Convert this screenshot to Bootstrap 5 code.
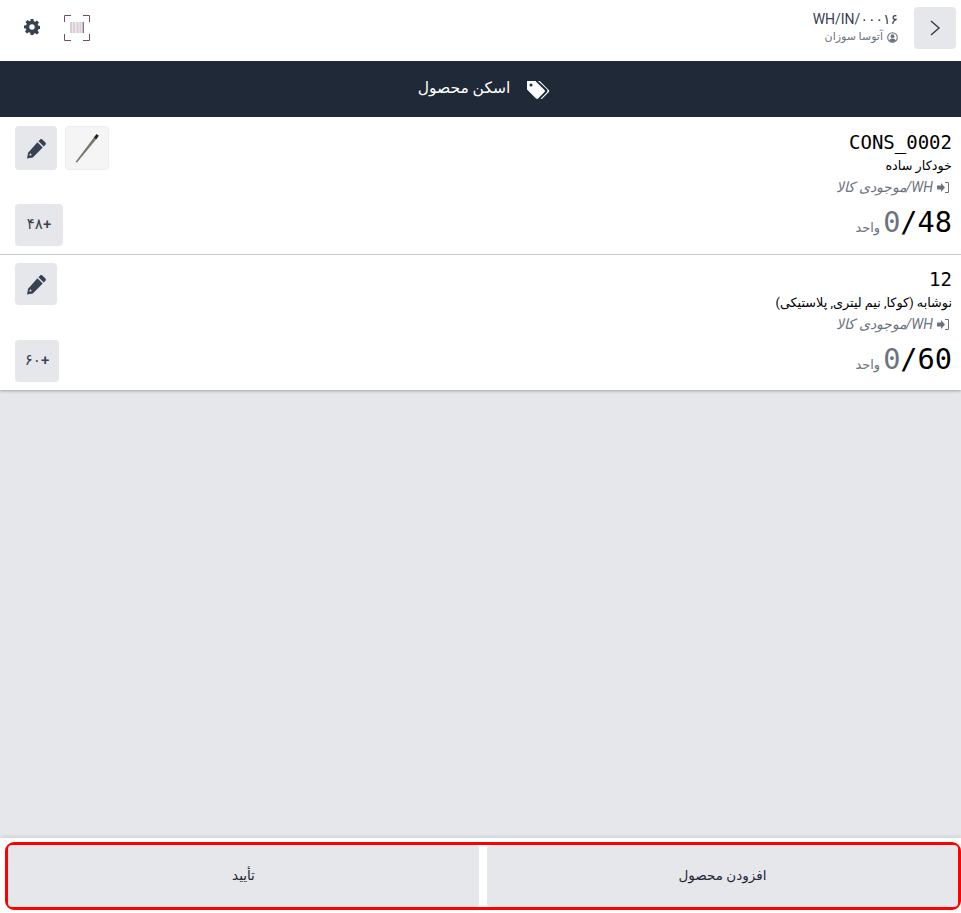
<!DOCTYPE html>
<html lang="fa" dir="rtl">
<head>
    <meta charset="UTF-8" />
    <meta name="viewport" content="width=device-width, initial-scale=1.0" />
    <title>WH/IN/00016</title>
    <link href="https://cdn.jsdelivr.net/npm/bootstrap@5.3.2/dist/css/bootstrap.min.css" rel="stylesheet" />
    <style>
        html, body {
            height: 913px;
            overflow: hidden;
        }

        body {
            font-family: Roboto, "DejaVu Sans", sans-serif;
            font-size: 13px;
            line-height: 19.5px;
            color: #111827;
            background-color: #e6e7eb;
        }

        .app-shell {
            height: 913px;
        }

        .top-bar {
            height: 61px;
            padding: 7px 5px 0 24px;
            background-color: #fff;
        }

        .square-btn {
            width: 42px;
            height: 42px;
            border: 0;
            border-radius: 4px;
            padding: 0;
            background-color: #e6e7eb;
            color: #374151;
        }

        .square-btn.tall-btn {
            height: 44px;
        }

        .square-btn.picture-btn {
            width: 44px;
            height: 44px;
            background-color: #f6f5f5;
            border: 1px solid #eeeeee;
        }

        .square-btn.qty-btn {
            width: 48px;
            font-size: 15px;
            font-weight: 500;
        }

        .square-btn.qty-btn.narrow {
            width: 44px;
        }

        .pick-name {
            font-size: 14px;
            line-height: 17px;
            color: #374151;
            margin-top: 4px;
        }

        .pick-digits {
            letter-spacing: -1px;
        }

        .pick-user {
            font-size: 11px;
            line-height: 16px;
            color: #6b7280;
            margin-top: 1px;
        }

        .gear-icon {
            margin-bottom: 3px;
        }

        .title-bar {
            height: 56px;
            padding-left: 7px;
            background-color: #1f2937;
            color: #fff;
            font-size: 15.5px;
            font-weight: 500;
        }

        .move-line {
            background-color: #fff;
            padding: 8px 9px 0 15px;
        }

        .move-line.first-line {
            height: 138px;
            padding-top: 9px;
            border-bottom: 1px solid #d1d5db;
        }

        .move-line.second-line {
            height: 135px;
            box-shadow: 0 1px 3px rgba(0, 0, 0, .3);
        }

        .line-code {
            font-family: "DejaVu Sans Mono", monospace;
            font-size: 19px;
            line-height: 24px;
            color: #000;
            margin-top: 4px;
        }

        .line-name {
            font-size: 12.8px;
            line-height: 18px;
            color: #000;
            margin-top: 3px;
        }

        .line-place {
            font-size: 14px;
            line-height: 18px;
            font-style: italic;
            color: #6b7280;
            margin-top: 3px;
            margin-inline-start: 3px;
        }

        .line-amount {
            margin-top: 8px;
        }

        .line-qty {
            font-family: "DejaVu Sans Mono", monospace;
            font-size: 28.6px;
            line-height: 36px;
            color: #000;
        }

        .line-qty .done-qty {
            color: #6b7280;
        }

        .line-unit {
            font-size: 13px;
            color: #6b7280;
            margin-inline-start: 3px;
        }

        .bottom-bar {
            height: 75px;
            margin-top: auto;
            padding: 4px 0 3px 5px;
            background-color: #fff;
            box-shadow: 0 -1px 4px rgba(0, 0, 0, .12);
        }

        .bottom-frame {
            height: 68px;
            border: 3px solid #f00;
            border-radius: 9px;
            gap: 8px;
        }

        .bottom-btn {
            flex: 1 1 0;
            border: 0;
            border-radius: 4px;
            background-color: #e6e7eb;
            color: #1f2937;
            font-size: 13.5px;
            font-weight: 500;
        }
    </style>
</head>

<body>
    <div class="app-shell d-flex flex-column">
        <header class="top-bar d-flex align-items-start">
            <button class="square-btn d-flex align-items-center justify-content-center" type="button" aria-label="back">
                <svg width="14" height="18" viewBox="0 0 14 18"><path d="M3 2l8 7-8 7" fill="none" stroke="#374151" stroke-width="1.500" /></svg>
            </button>
            <div class="me-3">
                <div class="pick-name">WH/IN/<span class="pick-digits">۰۰۰۱۶</span></div>
                <div class="pick-user d-flex align-items-center gap-1">
                    <svg width="11" height="11" viewBox="0 0 16 16"><circle cx="8" cy="8" r="7" fill="none" stroke="#6b7280" stroke-width="1.600" /><circle cx="8" cy="6" r="2.800" fill="#6b7280" /><path d="M3.400 12.600C4.200 10.200 6 9.500 8 9.500s3.800.7 4.600 3.100A6.800 6.800 0 0 1 3.400 12.600Z" fill="#6b7280" /></svg>
                    <span>آتوسا سوزان</span>
                </div>
            </div>
            <div class="d-flex align-items-center gap-4 pt-2 me-auto">
                <svg width="26" height="26" viewBox="0 0 26 26">
                    <path d="M.5 7V.5h6.500M19 .5h6.500V7M.5 19v6.500H7M19 25.500h6.500V19" fill="none" stroke="#714b67" stroke-width="1" />
                    <path d="M6 7h14v11H6Z" fill="#d9ced6" />
                    <path d="M8 7h1v11H8ZM11 7h1.500v11H11ZM14.500 7h1v11h-1ZM17 7h.8v11H17Z" fill="#efeaee" />
                    <path d="M18.800 7H20v11h-1.200Z" fill="#8f7288" />
                </svg>
                <svg class="gear-icon" width="16" height="16" viewBox="0 0 17 17">
                    <path fill="#374151" fill-rule="evenodd" d="M7 0h3l.4 2.300 1.500.6 1.900-1.300 2.100 2.100-1.300 1.900.6 1.500 2.300.4v3l-2.300.4-.6 1.500 1.300 1.900-2.100 2.100-1.900-1.300-1.500.6L10 17H7l-.4-2.300-1.500-.6-1.900 1.300-2.100-2.100 1.300-1.900-.6-1.500L0 10V7l2.300-.4.6-1.500-1.300-1.900 2.100-2.100 1.900 1.300 1.500-.6ZM8.500 5.600a2.900 2.900 0 1 0 0 5.800 2.900 2.900 0 0 0 0-5.800Z" />
                </svg>
            </div>
        </header>

        <div class="title-bar d-flex align-items-center justify-content-center gap-3">
            <svg width="24" height="19" viewBox="0 0 24 19">
                <path fill="#fff" fill-rule="evenodd" d="M1 1h8.500l9 9c.6.600.6 1.500 0 2.100l-6.400 6.400c-.6.600-1.500.6-2.100 0l-9-9ZM5 3.500a1.500 1.500 0 1 0 0 3 1.500 1.500 0 0 0 0-3Z" />
                <path fill="#fff" d="M12 1h1.800l9 9c.6.600.6 1.500 0 2.100l-6.400 6.400c-.5.500-1.200.5-1.800.2l6.100-6.100c1-1 1-2.700 0-3.700Z" />
            </svg>
            <span>اسکن محصول</span>
        </div>

        <div class="move-line first-line d-flex justify-content-between">
            <div>
                <div class="line-code text-end" dir="ltr">CONS_0002</div>
                <div class="line-name">خودکار ساده</div>
                <div class="line-place d-flex align-items-center gap-1">
                    <svg width="12" height="11" viewBox="0 0 12 11"><path fill="#6b7280" d="M0 3.500h4V1l4 4.500L4 10V7.500H0Z" /><path fill="none" stroke="#6b7280" d="M8 .5h3.500v10H8" /></svg>
                    <span>WH/موجودی کالا</span>
                </div>
                <div class="line-amount d-flex align-items-baseline">
                    <span class="line-qty" dir="ltr"><span class="done-qty">0</span>/48</span>
                    <span class="line-unit">واحد</span>
                </div>
            </div>
            <div class="d-flex flex-column justify-content-between align-items-end pb-2">
                <div class="d-flex gap-2 align-items-start">
                    <div class="square-btn picture-btn d-flex align-items-center justify-content-center">
                        <svg width="42" height="42" viewBox="0 0 42 42"><path d="M9.500 35 29 9l2.400 1.800L11 35.500Z" fill="#77776c" /><path d="M28 10.500 30.500 7l2.400 1.800-2.600 3.500Z" fill="#222" /></svg>
                    </div>
                    <button class="square-btn tall-btn d-flex align-items-center justify-content-center" type="button" aria-label="edit">
                        <svg width="21" height="21" viewBox="0 0 20 20"><path fill="#374151" d="M13.500 1.500c.6-.6 1.500-.6 2.100 0l2.900 2.900c.6.600.6 1.500 0 2.100l-1.600 1.600-5-5ZM10.900 4.100l5 5L6.500 18.500 1 19.500l1-5.500Zm-7 10.300-.7 2.400 2.400-.7Z" /></svg>
                    </button>
                </div>
                <button class="square-btn qty-btn" type="button">+۴۸</button>
            </div>
        </div>

        <div class="move-line second-line d-flex justify-content-between">
            <div>
                <div class="line-code text-end" dir="ltr">12</div>
                <div class="line-name">نوشابه (کوکا, نیم لیتری, پلاستیکی)</div>
                <div class="line-place d-flex align-items-center gap-1">
                    <svg width="12" height="11" viewBox="0 0 12 11"><path fill="#6b7280" d="M0 3.500h4V1l4 4.500L4 10V7.500H0Z" /><path fill="none" stroke="#6b7280" d="M8 .5h3.500v10H8" /></svg>
                    <span>WH/موجودی کالا</span>
                </div>
                <div class="line-amount d-flex align-items-baseline">
                    <span class="line-qty" dir="ltr"><span class="done-qty">0</span>/60</span>
                    <span class="line-unit">واحد</span>
                </div>
            </div>
            <div class="d-flex flex-column justify-content-between align-items-end pb-2">
                <button class="square-btn d-flex align-items-center justify-content-center" type="button" aria-label="edit">
                    <svg width="21" height="21" viewBox="0 0 20 20"><path fill="#374151" d="M13.500 1.500c.6-.6 1.500-.6 2.100 0l2.900 2.900c.6.600.6 1.500 0 2.100l-1.600 1.600-5-5ZM10.900 4.100l5 5L6.500 18.500 1 19.500l1-5.500Zm-7 10.300-.7 2.400 2.400-.7Z" /></svg>
                </button>
                <button class="square-btn qty-btn narrow" type="button">+۶۰</button>
            </div>
        </div>

        <footer class="bottom-bar">
            <div class="bottom-frame d-flex">
                <button class="bottom-btn" type="button">افزودن محصول</button>
                <button class="bottom-btn" type="button">تأیید</button>
            </div>
        </footer>
    </div>
    <script src="https://cdn.jsdelivr.net/npm/bootstrap@5.3.2/dist/js/bootstrap.bundle.min.js"></script>
</body>
</html>
